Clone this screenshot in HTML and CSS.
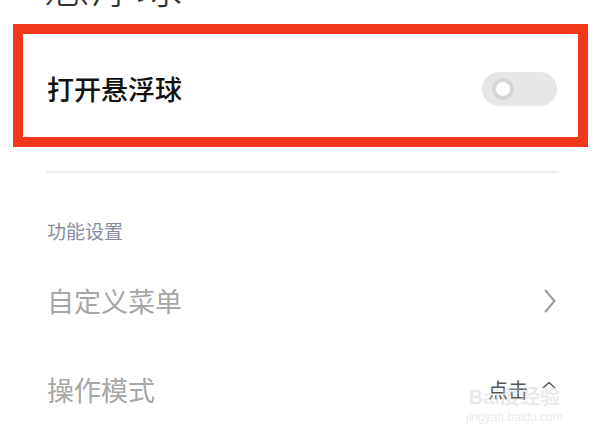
FILE: index.html
```html
<!DOCTYPE html>
<html lang="zh-CN">
<head>
  <meta charset="UTF-8">
  <meta name="viewport" content="width=device-width, initial-scale=1.0">
  <title>悬浮球</title>
  <link rel="stylesheet" href="styles.css">
</head>
<body>
  <h1 class="title">悬浮球</h1>

  <!-- 开关 -->
  <section class="toggle-box">
    <div class="row">
      <span class="row-label">打开悬浮球</span>
      <span class="switch"><span class="knob"></span></span>
    </div>
  </section>

  <div class="divider"></div>

  <h2 class="section-label">功能设置</h2>

  <div class="item">
    <span class="item-label">自定义菜单</span>
    <svg class="chevron" width="12" height="24" viewBox="0 0 12 24">
      <path d="M1.5 1.5 L10.5 12 L1.5 22.5" fill="none" stroke="#9a9a9a" stroke-width="2" stroke-linecap="round" stroke-linejoin="round"/>
    </svg>
  </div>

  <div class="item">
    <span class="item-label">操作模式</span>
    <span class="item-value">
      点击
      <svg class="caret" width="14" height="8" viewBox="0 0 14 8">
        <path d="M1.5 6.5 L7 1.5 L12.5 6.5" fill="none" stroke="#555" stroke-width="1.6" stroke-linecap="round" stroke-linejoin="round"/>
      </svg>
    </span>
    <div class="watermark">
      <span class="wm-logo">Bai度经验</span>
      <span class="wm-url">jingyan.baidu.com</span>
    </div>
  </div>
</body>
</html>
```

FILE: styles.css
```css
* {
  margin: 0;
  padding: 0;
  box-sizing: border-box;
}

body {
  font-family: "Noto Sans CJK SC", "Noto Sans", sans-serif;
  background-color: #fff;
  color: #333;
  overflow: hidden;
}

.title {
  font-size: 46px;
  line-height: 46px;
  font-weight: 300;
  color: #333;
  margin-top: -40px;
  padding-left: 44px;
}

.toggle-box {
  margin: 18px 20px 0 13px;
  border: 10px solid #f2381b;
  padding: 38px 21px 31px 24px;
}

.row {
  display: flex;
  justify-content: space-between;
  align-items: center;
  height: 34px;
}

.row-label {
  font-size: 27px;
  font-weight: 500;
  color: #111;
  line-height: 34px;
}

.switch {
  width: 75px;
  height: 34px;
  border-radius: 17px;
  background-color: #e6e6e6;
  display: flex;
  align-items: center;
  padding-left: 10px;
}

.knob {
  width: 22px;
  height: 22px;
  border-radius: 50%;
  background-color: #fff;
  border: 4px solid #d6d6d6;
}

.divider {
  margin: 24px 49px 0 46px;
  height: 2px;
  background-color: #ededed;
}

.section-label {
  margin-top: 48px;
  padding-left: 47px;
  font-size: 19px;
  line-height: 19px;
  font-weight: 400;
  color: #868b9c;
}

.item {
  position: relative;
  display: flex;
  justify-content: space-between;
  align-items: center;
  height: 89px;
  padding: 0 52px 0 47px;
}

.section-label + .item {
  margin-top: 16px;
}

.item-label {
  font-size: 27px;
  color: #a6a6a6;
}

.item-value {
  display: flex;
  align-items: center;
  gap: 14px;
  font-size: 20px;
  color: #555;
}

.caret {
  margin-top: -10px;
}

.watermark {
  position: absolute;
  left: 466px;
  top: 42px;
  display: flex;
  flex-direction: column;
  align-items: center;
  color: rgba(200, 200, 200, 0.4);
  font-family: "Liberation Sans", "Noto Sans CJK SC", sans-serif;
  pointer-events: none;
}

.wm-logo {
  font-size: 20px;
  line-height: 20px;
  font-weight: 700;
}

.wm-url {
  font-size: 12px;
  line-height: 14px;
  margin-top: 3px;
}
```
